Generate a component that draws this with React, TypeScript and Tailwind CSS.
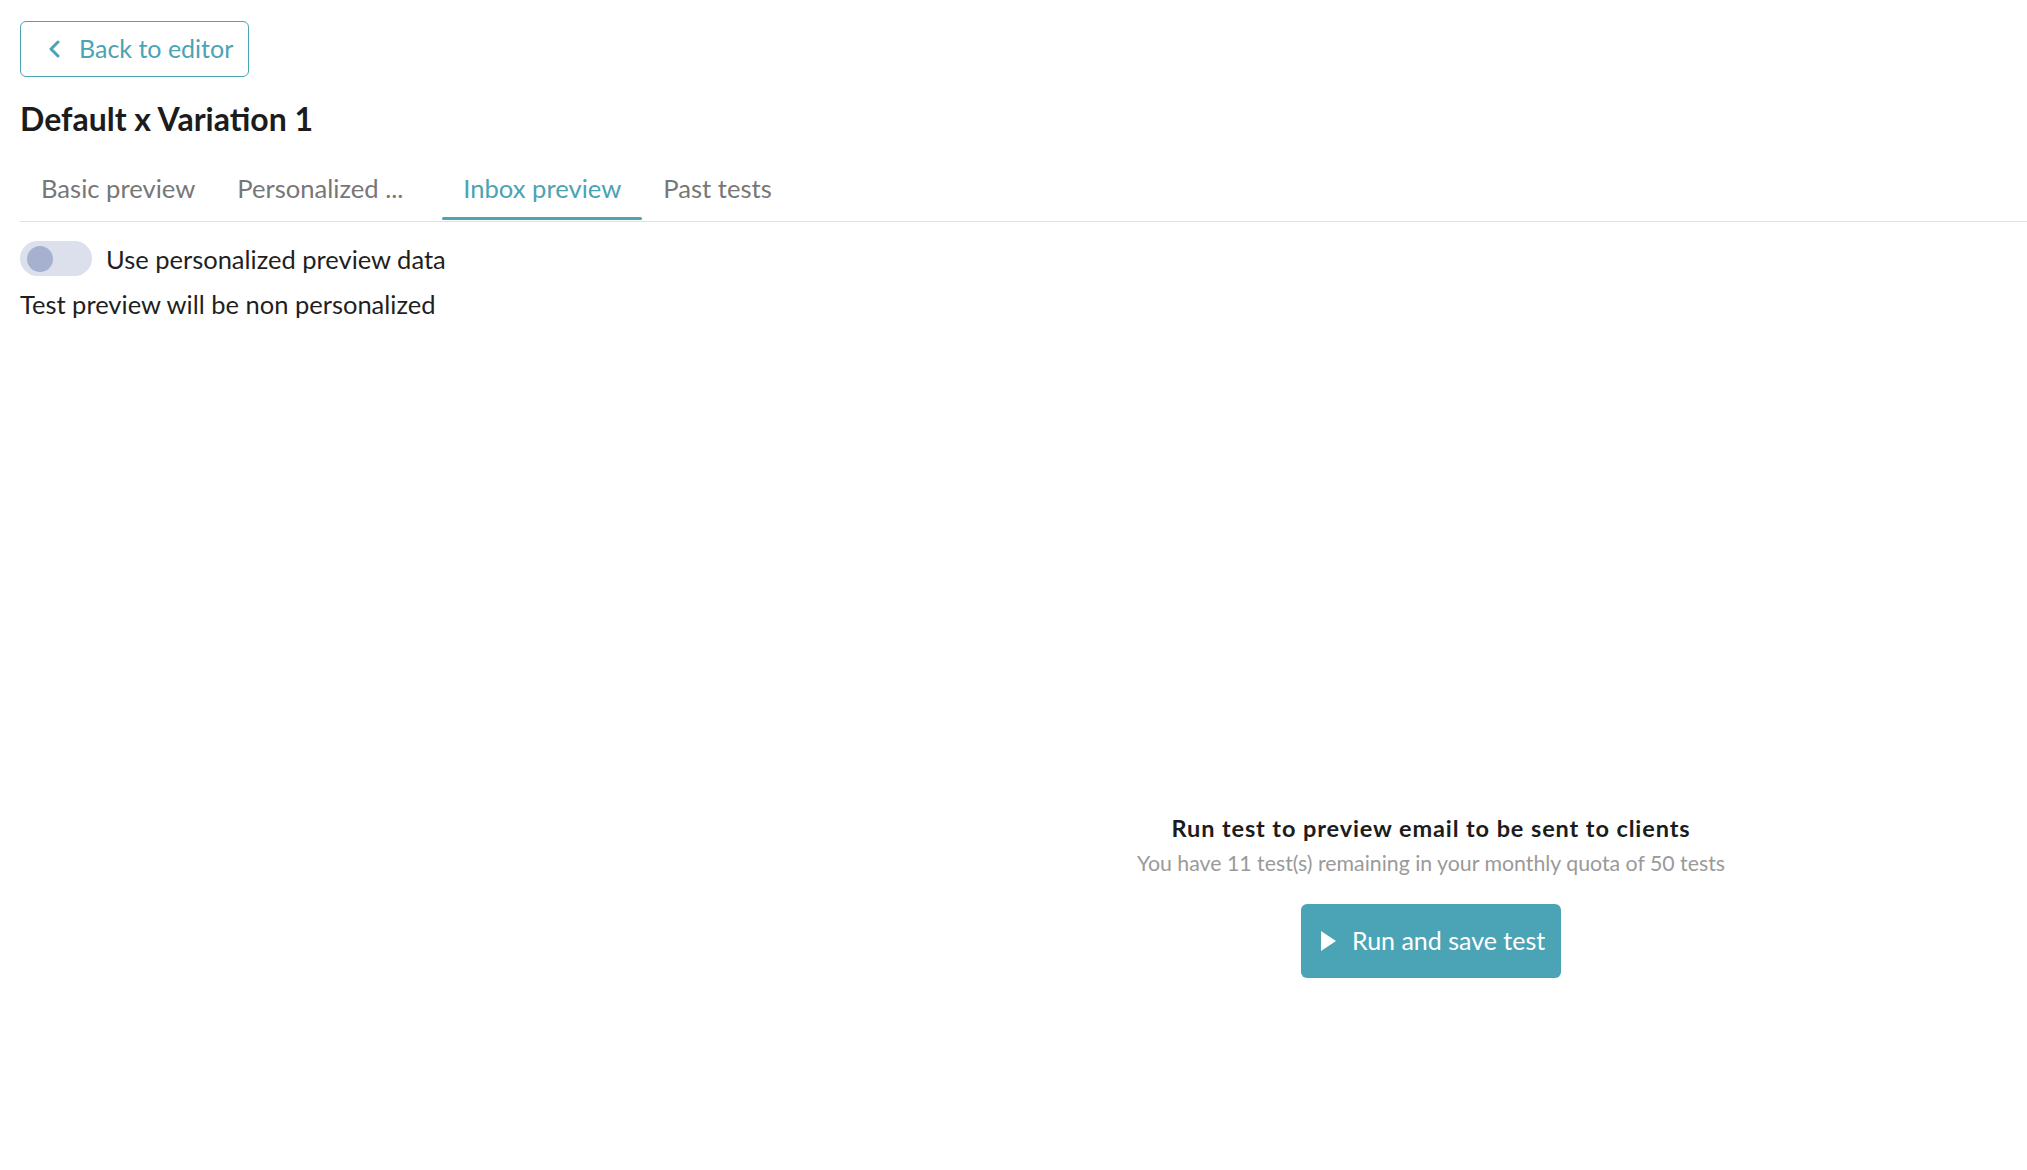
import { useState } from 'react';

const tabs = [
  { name: 'Basic preview', width: '' },
  { name: 'Personalized ...', width: 'w-[184px]' },
  { name: 'Inbox preview', width: '' },
  { name: 'Past tests', width: '' },
];

const Toggle = () => {
  const [on, setOn] = useState(false);
  return (
    <button
      onClick={() => setOn(!on)}
      className="relative h-[35px] w-[72px] shrink-0 rounded-full bg-[#dce0ed]"
    >
      <span
        className={`absolute top-[5px] h-[26px] w-[26px] rounded-full bg-[#a5b1cf] ${on ? 'left-[39px]' : 'left-[7px]'}`}
      />
    </button>
  );
};

export default function App() {
  const active = 'Inbox preview';

  return (
    <div className="min-h-screen bg-white pl-[20px] pt-[21px] text-[#1f1f1f] [font-family:Lato,'Open_Sans',sans-serif]">
      <button className="flex h-[56px] w-[229px] items-center gap-[18px] rounded-[6px] border border-[#4ba3b4] pl-[27px] text-[25px] text-[#4ba3b4]">
        <svg width="13" height="18" viewBox="0 0 13 18" fill="none">
          <path d="M10 2L3 9l7 7" stroke="currentColor" strokeWidth="3" strokeLinecap="round" strokeLinejoin="round" />
        </svg>
        <span>Back to editor</span>
      </button>

      <h1 className="mt-[22px] text-[32px] font-bold leading-[40px] text-[#1c1c1c]">Default x Variation 1</h1>

      <nav className="mt-[16px] flex border-b border-[#dde0ea]">
        {tabs.map((tab) => (
          <div
            key={tab.name}
            className={`relative flex h-[66px] items-center px-[21px] text-[25.6px] ${
              tab.name === active ? 'text-[#4ba3b4]' : 'text-[#777777]'
            }`}
          >
            <span className={`whitespace-nowrap ${tab.width}`}>{tab.name}</span>
            {tab.name === active && (
              <span className="absolute bottom-[1px] left-0 right-0 h-[3px] rounded-full bg-[#4ba3b4]" />
            )}
          </div>
        ))}
      </nav>

      <div className="mt-[19px] flex items-center gap-[14px]">
        <Toggle />
        <span className="text-[25.5px] leading-[32px]">Use personalized preview data</span>
      </div>
      <p className="mt-[12px] text-[25.5px] leading-[32px]">Test preview will be non personalized</p>

      <div className="flex">
        <div className="w-[815px] shrink-0" />
        <div className="flex flex-1 flex-col items-center pt-[494px]">
          <h2 className="text-[23.5px] font-bold leading-[28px] tracking-[0.9px] text-[#1c1c1c]">
            Run test to preview email to be sent to clients
          </h2>
          <p className="mt-[7px] text-[21.3px] leading-[28px] text-[#9a9a9a]">
            You have 11 test(s) remaining in your monthly quota of 50 tests
          </p>
          <button className="mt-[27px] flex h-[74px] w-[260px] items-center gap-[16px] rounded-[6px] bg-[#4ba4b5] pl-[20px] text-[25px] text-white">
            <svg width="15" height="20" viewBox="0 0 15 20">
              <path d="M0 0L15 10L0 20Z" fill="currentColor" />
            </svg>
            <span>Run and save test</span>
          </button>
        </div>
      </div>
    </div>
  );
}
